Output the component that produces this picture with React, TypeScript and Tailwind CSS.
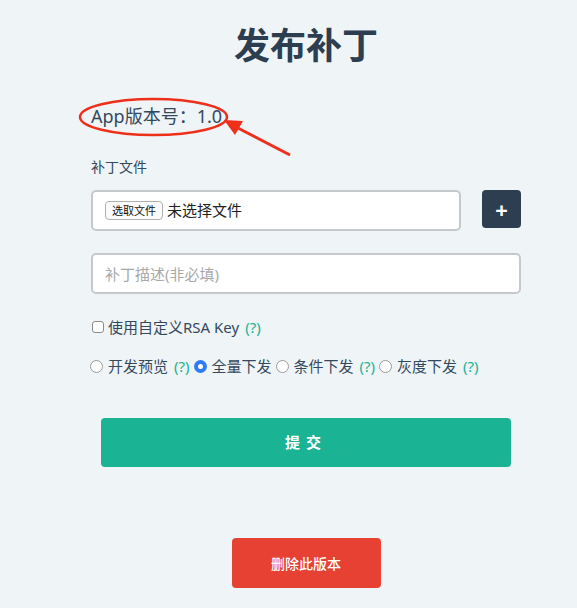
import React, { useState } from 'react';

const font = { fontFamily: '"Noto Sans", "Noto Sans CJK SC", sans-serif' };

const Hint = ({ gap = 'ml-[6px]' }: { gap?: string }) => <span className={`text-[#1ab394] ${gap}`}>(?)</span>;

const Radio = ({ checked, label, hint, onClick }: { checked: boolean; label: string; hint?: boolean; onClick: () => void }) => (
  <label onClick={onClick} className="flex items-center cursor-pointer">
    {checked ? (
      <span className="w-[13px] h-[13px] rounded-full bg-[#2f7df6] flex items-center justify-center">
        <span className="w-[5px] h-[5px] rounded-full bg-white" />
      </span>
    ) : (
      <span className="w-[13px] h-[13px] rounded-full border border-[#9a9a9a] bg-white" />
    )}
    <span className="ml-[5px]">{label}</span>
    {hint && <Hint gap="ml-[6px]" />}
  </label>
);

const App: React.FC = () => {
  const [mode, setMode] = useState('full');
  const [useKey, setUseKey] = useState(false);

  return (
    <div className="relative w-[577px] h-[608px] bg-[#eff4f6] overflow-hidden text-[#34495e]" style={font}>
      <div className="w-[430px] ml-[91px] pt-[24px] flex flex-col">
        <h1 className="text-center text-[36px] leading-[44px] font-semibold text-[#2c3e50]">发布补丁</h1>

        <p className="mt-[36px] text-[18px] leading-[24px]">App版本号：1.0</p>

        <p className="mt-[29px] text-[14px] leading-[20px]">补丁文件</p>

        <div className="mt-[13px] flex gap-[21px]">
          <div className="flex-1 h-[41px] bg-white border-2 border-[#c5c9cc] rounded-[5px] flex items-center pl-[12px]">
            <span className="text-[11px] leading-[17px] px-[6px] border border-[#b0b0b0] rounded-[4px] bg-[#fbfbfb] text-[#111]">选取文件</span>
            <span className="ml-[4px] text-[15px] text-[#222]">未选择文件</span>
          </div>
          <button className="w-[39px] h-[38px] rounded-[4px] bg-[#2c3e50] text-white text-[22px] font-bold leading-none flex items-center justify-center">
            +
          </button>
        </div>

        <input
          className="mt-[22px] h-[41px] bg-white border-2 border-[#c5c9cc] rounded-[5px] px-[12px] text-[15px] outline-none placeholder:text-[#a9a9a9]"
          placeholder="补丁描述(非必填)"
        />

        <div className="mt-[23px] text-[15px] leading-[20px] flex items-center">
          <span
            onClick={() => setUseKey(!useKey)}
            className={`w-[12px] h-[12px] ml-[1px] rounded-[3px] border border-[#8a8a8a] ${useKey ? 'bg-[#2f7df6]' : 'bg-white'}`}
          />
          <span className="ml-[4px]">使用自定义RSA Key</span>
          <Hint />
        </div>

        <div className="mt-[19px] text-[15px] leading-[20px] flex items-center gap-[4px] -ml-[1px]">
          <Radio checked={mode === 'dev'} label="开发预览" hint onClick={() => setMode('dev')} />
          <Radio checked={mode === 'full'} label="全量下发" onClick={() => setMode('full')} />
          <Radio checked={mode === 'cond'} label="条件下发" hint onClick={() => setMode('cond')} />
          <Radio checked={mode === 'gray'} label="灰度下发" hint onClick={() => setMode('gray')} />
        </div>

        <button className="mt-[42px] mx-[10px] h-[49px] rounded-[4px] bg-[#1ab394] text-white text-[15px] font-semibold tracking-[6px]">
          提交
        </button>

        <button className="mt-[71px] self-center w-[149px] h-[50px] rounded-[4px] bg-[#e74133] text-white text-[14px] font-medium">
          删除此版本
        </button>
      </div>

      <svg className="absolute inset-0 pointer-events-none" width="577" height="608">
        <ellipse cx="153.5" cy="117" rx="73.5" ry="18" fill="none" stroke="#ee2f1a" strokeWidth="2.5" />
        <line x1="290" y1="155" x2="236" y2="127" stroke="#ee2f1a" strokeWidth="3" />
        <polygon points="224,120 243,121 235,135" fill="#ee2f1a" />
      </svg>
    </div>
  );
};

export default App;
